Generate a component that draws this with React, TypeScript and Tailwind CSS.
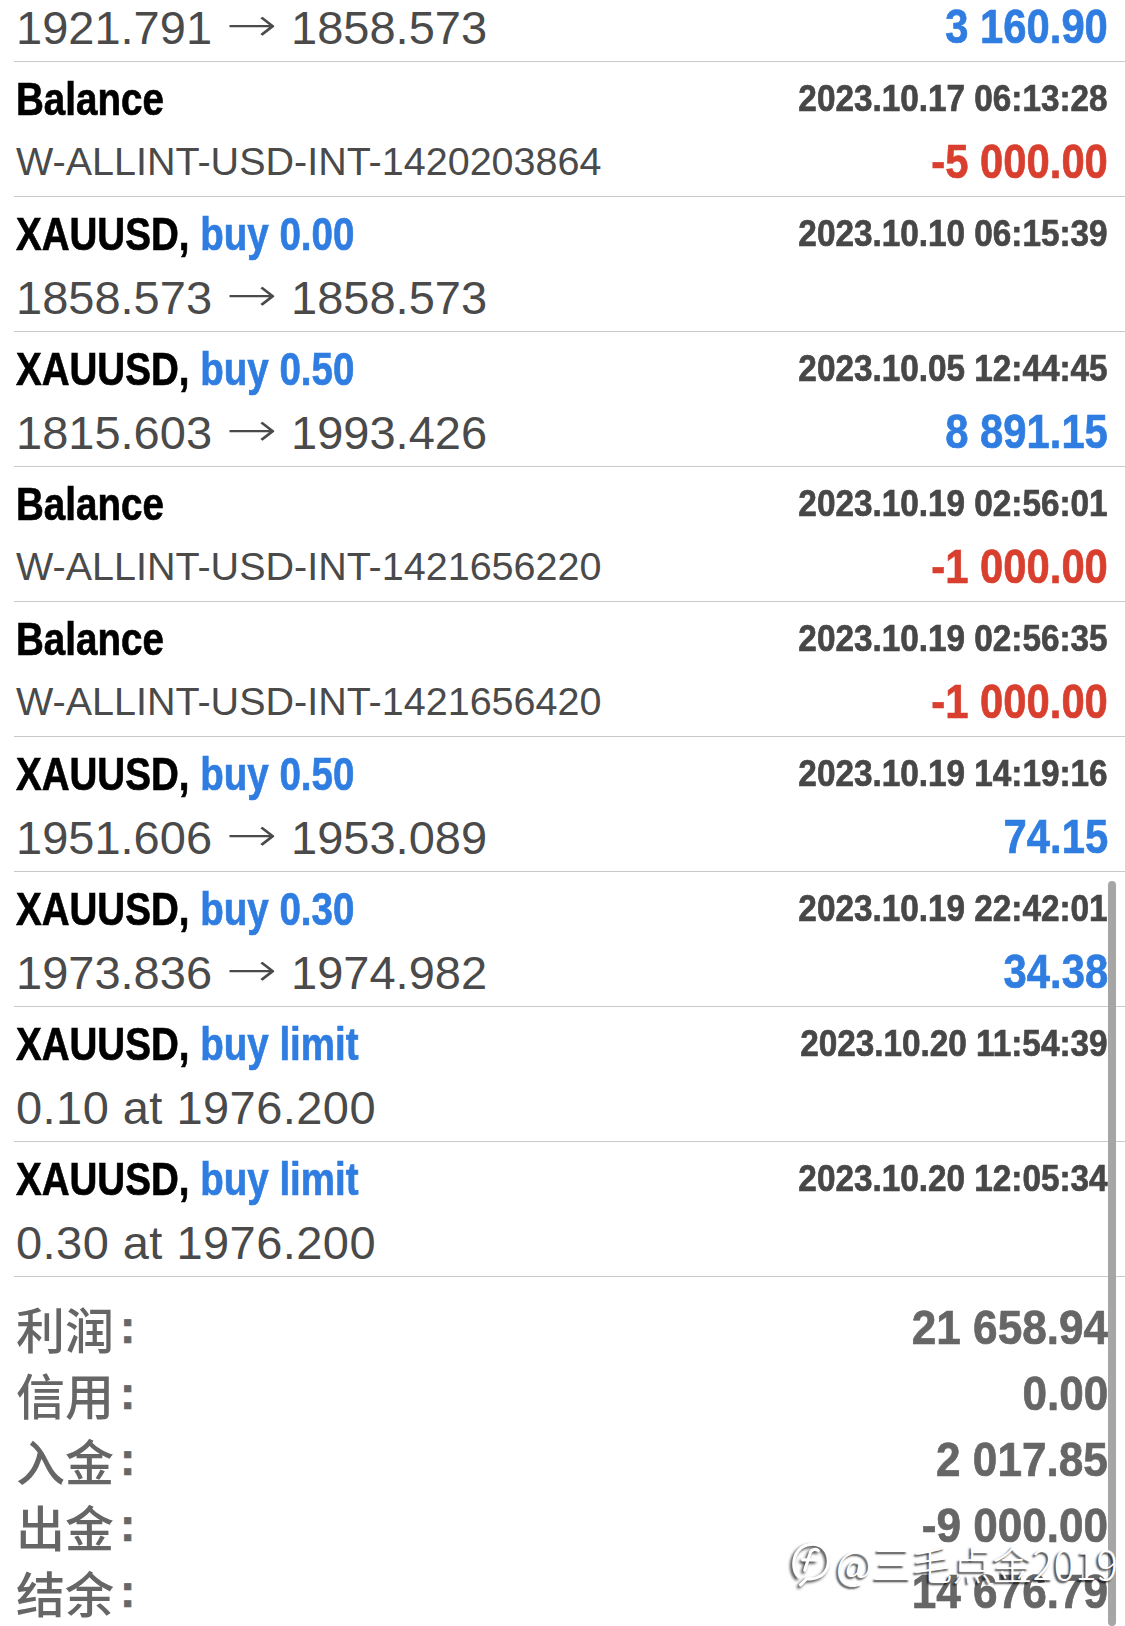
import React from 'react'

const bold =
  '[font-family:"Liberation_Sans",Arial,sans-serif] font-bold inline-block [-webkit-text-stroke:0.7px_currentColor]'

type Row = {
  symbol?: string
  side?: string
  title?: string
  time: string
  from?: string
  to?: string
  sub?: string
  amount?: string
  tone?: 'blue' | 'red'
}

const rows: Row[] = [
  { symbol: 'XAUUSD', side: 'buy 0.50', time: '2023.10.05 06:00:00', from: '1921.791', to: '1858.573', amount: '3 160.90', tone: 'blue' },
  { title: 'Balance', time: '2023.10.17 06:13:28', sub: 'W-ALLINT-USD-INT-1420203864', amount: '-5 000.00', tone: 'red' },
  { symbol: 'XAUUSD', side: 'buy 0.00', time: '2023.10.10 06:15:39', from: '1858.573', to: '1858.573' },
  { symbol: 'XAUUSD', side: 'buy 0.50', time: '2023.10.05 12:44:45', from: '1815.603', to: '1993.426', amount: '8 891.15', tone: 'blue' },
  { title: 'Balance', time: '2023.10.19 02:56:01', sub: 'W-ALLINT-USD-INT-1421656220', amount: '-1 000.00', tone: 'red' },
  { title: 'Balance', time: '2023.10.19 02:56:35', sub: 'W-ALLINT-USD-INT-1421656420', amount: '-1 000.00', tone: 'red' },
  { symbol: 'XAUUSD', side: 'buy 0.50', time: '2023.10.19 14:19:16', from: '1951.606', to: '1953.089', amount: '74.15', tone: 'blue' },
  { symbol: 'XAUUSD', side: 'buy 0.30', time: '2023.10.19 22:42:01', from: '1973.836', to: '1974.982', amount: '34.38', tone: 'blue' },
  { symbol: 'XAUUSD', side: 'buy limit', time: '2023.10.20 11:54:39', sub: '0.10 at 1976.200' },
  { symbol: 'XAUUSD', side: 'buy limit', time: '2023.10.20 12:05:34', sub: '0.30 at 1976.200' },
]

const summary = [
  ['利润', '21 658.94'],
  ['信用', '0.00'],
  ['入金', '2 017.85'],
  ['出金', '-9 000.00'],
  ['结余', '14 676.79'],
]

const HistoryRow = ({ row }: { row: Row }) => {
  const isBalance = !!row.title
  return (
    <div className="ml-[14px] h-[135px] border-b border-[#c9c9c9] pl-[2px] pr-[17px] flex flex-col">
      <div className="h-[72px] flex items-center justify-between leading-none">
        <div className={`${bold} origin-left scale-x-[0.82] text-[47px] text-black whitespace-nowrap`}>
          {isBalance ? (
            row.title
          ) : (
            <>
              {row.symbol}, <span className="text-[#2f7de1]">{row.side}</span>
            </>
          )}
        </div>
        <div className={`${bold} origin-right scale-x-[0.9] text-[37px] text-[#474747] whitespace-nowrap`}>
          {row.time}
        </div>
      </div>
      <div className="h-[56px] flex items-center justify-between leading-none">
        <div
          className={`[font-family:"Liberation_Sans",Arial,sans-serif] text-[#4a4a4a] whitespace-nowrap ${
            isBalance ? 'text-[39.5px]' : row.from ? 'text-[47px]' : 'text-[47px] tracking-[0.45px]'
          }`}
        >
          {row.from ? (
            <>
              {row.from}
              <span className="inline-block w-[79px] text-center relative top-[-3px]">
                <span className='inline-block scale-x-[1.3] [font-family:"DejaVu_Sans",sans-serif] font-extralight text-[47px]'>
                  →
                </span>
              </span>
              {row.to}
            </>
          ) : (
            row.sub
          )}
        </div>
        {row.amount && (
          <div
            className={`${bold} origin-right scale-x-[0.87] text-[48px] whitespace-nowrap ${
              row.tone === 'red' ? 'text-[#d93f2e]' : 'text-[#2f7de1]'
            }`}
          >
            {row.amount}
          </div>
        )}
      </div>
    </div>
  )
}

const Watermark = () => (
  <div className="absolute left-[790px] top-[1539px] flex items-center gap-[4px] text-white [text-shadow:-2px_2px_2px_rgba(0,0,0,0.8)]">
    <svg width="42" height="48" viewBox="0 0 40 46" className="[filter:drop-shadow(-2px_2px_1.5px_rgba(0,0,0,0.8))]">
      <path
        d="M8 36 C2 30 2 18 8 11 C14 4 26 3 32 9 C38 15 38 26 33 32 C29 37 22 39 16 38 L10 44"
        fill="none"
        stroke="white"
        strokeWidth="3"
        strokeLinecap="round"
      />
      <path d="M14 30 L19 14 C20 10 24 9 27 11" fill="none" stroke="white" strokeWidth="3" strokeLinecap="round" />
      <path d="M12 20 L25 20" fill="none" stroke="white" strokeWidth="3" strokeLinecap="round" />
    </svg>
    <span className='[font-family:"Noto_Sans_CJK_SC",sans-serif] font-light text-[40px] leading-none whitespace-nowrap'>
      @三毛点金2019
    </span>
  </div>
)

const App = () => {
  return (
    <div className="relative w-[1125px] h-[1626px] overflow-hidden bg-white">
      <div className="mt-[-73px]">
        {rows.map((row, i) => (
          <HistoryRow key={i} row={row} />
        ))}
      </div>

      <div className="pt-[17px] pl-[16px] pr-[17px] flex flex-col">
        {summary.map(([label, value]) => (
          <div key={label} className="h-[66px] flex items-center justify-between leading-none text-[#666666]">
            <div className="flex items-center whitespace-nowrap">
              <span className='[font-family:"Noto_Sans_CJK_SC",sans-serif] font-medium text-[49px]'>{label}</span>
              <span className={`${bold} text-[46px] ml-[6px]`}>:</span>
            </div>
            <div className={`${bold} origin-right scale-x-[0.9] text-[49px] whitespace-nowrap`}>{value}</div>
          </div>
        ))}
      </div>

      <div className="absolute right-[9px] top-[881px] bottom-0 w-[8px] rounded-full bg-[#a6a6a6]" />

      <Watermark />
    </div>
  )
}

export default App
